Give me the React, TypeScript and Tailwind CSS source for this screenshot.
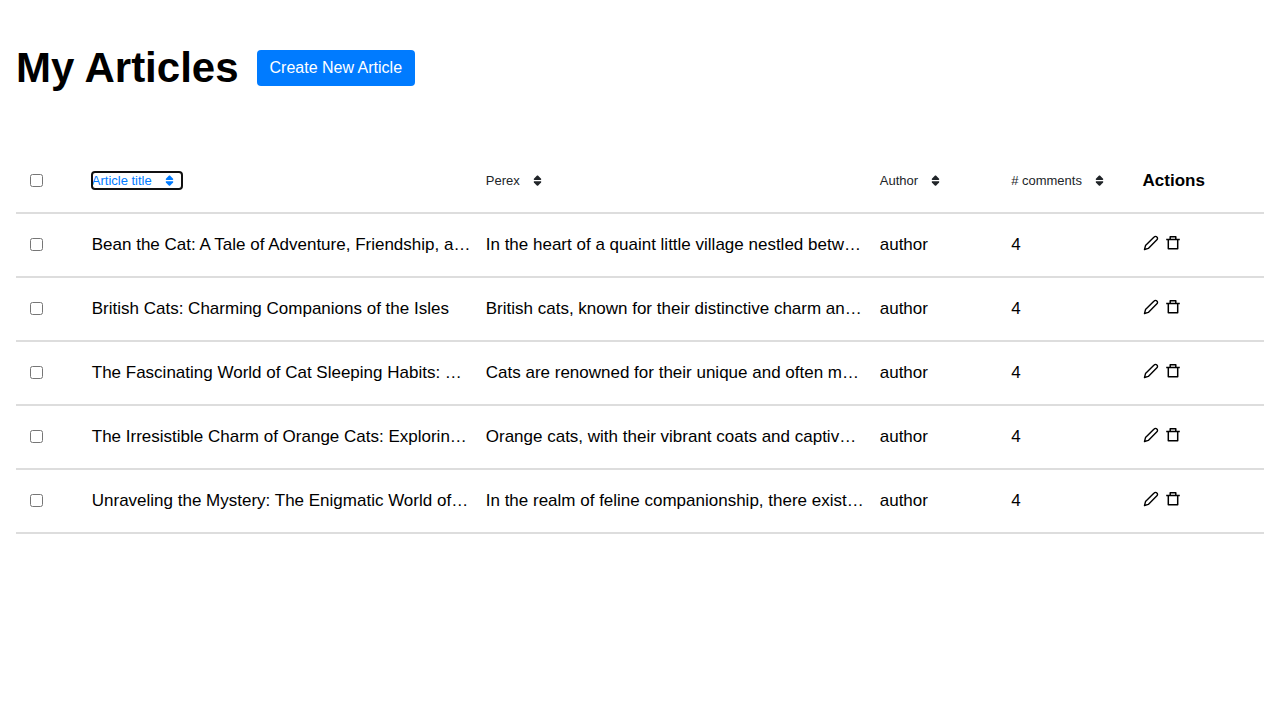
import React from "react";

type Article = {
  id: number;
  title: string;
  perex: string;
  author: string;
  comments: number;
};

const articles: Article[] = [
  {
    id: 1,
    title: "Bean the Cat: A Tale of Adventure, Friendship, and Feline Grace",
    perex: "In the heart of a quaint little village nestled between rolling hills and green meadows",
    author: "author",
    comments: 4,
  },
  {
    id: 2,
    title: "British Cats: Charming Companions of the Isles",
    perex: "British cats, known for their distinctive charm and gentle nature",
    author: "author",
    comments: 4,
  },
  {
    id: 3,
    title: "The Fascinating World of Cat Sleeping Habits: Unveiling the Secrets",
    perex: "Cats are renowned for their unique and often mysterious behaviour",
    author: "author",
    comments: 4,
  },
  {
    id: 4,
    title: "The Irresistible Charm of Orange Cats: Exploring Their Vibrant World",
    perex: "Orange cats, with their vibrant coats and captivating personalities",
    author: "author",
    comments: 4,
  },
  {
    id: 5,
    title: "Unraveling the Mystery: The Enigmatic World of Black Cats",
    perex: "In the realm of feline companionship, there exists a creature of mystery",
    author: "author",
    comments: 4,
  },
];

function SortIcon() {
  return (
    <svg viewBox="0 0 24 16" className="h-4 w-6" fill="currentColor" aria-hidden="true">
      <path d="M11.5 2.5c.3 0 .5.1.7.3l2.9 3c.4.5.1 1.2-.5 1.2H8.4c-.6 0-.9-.7-.5-1.2l2.9-3c.2-.2.4-.3.7-.3z" />
      <path d="M11.5 12.7c.3 0 .5-.1.7-.3l2.9-3c.4-.5.1-1.2-.5-1.2H8.4c-.6 0-.9.7-.5 1.2l2.9 3c.2.2.4.3.7.3z" />
    </svg>
  );
}

function PencilIcon() {
  return (
    <svg
      viewBox="0 0 16 16"
      className="size-4"
      fill="none"
      stroke="currentColor"
      strokeWidth="1.4"
      strokeLinejoin="round"
      aria-hidden="true"
    >
      <path d="M1.5 14.5l1-3.9 8.6-8.6a1.9 1.9 0 0 1 2.8 0 1.9 1.9 0 0 1 0 2.8l-8.6 8.6z" />
    </svg>
  );
}

function TrashIcon() {
  return (
    <svg
      viewBox="0 0 16 16"
      className="size-4"
      fill="none"
      stroke="currentColor"
      strokeWidth="1.5"
      strokeLinejoin="round"
      aria-hidden="true"
    >
      <path d="M1.2 4.6h13.6M3.3 4.6v9.2h9.4V4.6M5.2 4.5V1.8h5.6v2.7" />
    </svg>
  );
}

function SortButton({ label, active = false }: { label: string; active?: boolean }) {
  return (
    <button
      type="button"
      className={
        active
          ? "flex h-[17px] items-center gap-1.5 rounded-[3px] text-[#007bff] outline-2 -outline-offset-1 outline-[#101010]"
          : "flex h-[17px] items-center gap-1.5 text-[#212529]"
      }
    >
      {label}
      <SortIcon />
    </button>
  );
}

export default function App() {
  return (
    <main className="bg-white px-4 font-['Liberation_Sans',Arial,sans-serif] text-[17px] leading-6 text-black">
      <header className="flex items-center gap-[18px] pt-10">
        <h1 className="text-[42px] leading-14 font-bold">My Articles</h1>
        <button
          type="button"
          className="h-9 rounded-sm bg-[#007bff] px-[13px] text-base text-white"
        >
          Create New Article
        </button>
      </header>

      <table className="mt-[53px] w-full table-fixed border-collapse text-left">
        <colgroup>
          <col className="w-[5.27%]" />
          <col className="w-[31.57%]" />
          <col className="w-[31.57%]" />
          <col className="w-[10.53%]" />
          <col className="w-[10.53%]" />
          <col className="w-[10.53%]" />
        </colgroup>
        <thead>
          <tr className="h-16 border-b-2 border-[#dddddd] text-[13px]">
            <th className="px-[10px] font-normal">
              <input type="checkbox" aria-label="Select all articles" className="ml-1 block size-[13px]" />
            </th>
            <th className="px-[10px] font-normal">
              <SortButton label="Article title" active />
            </th>
            <th className="px-[10px] font-normal">
              <SortButton label="Perex" />
            </th>
            <th className="px-[10px] font-normal">
              <SortButton label="Author" />
            </th>
            <th className="px-[10px] font-normal">
              <SortButton label="# comments" />
            </th>
            <th className="px-[10px] text-[17px] font-bold">Actions</th>
          </tr>
        </thead>
        <tbody>
          {articles.map((article) => (
            <tr key={article.id} className="h-16 border-b-2 border-[#dddddd]">
              <td className="px-[10px] pb-0.5">
                <input
                  type="checkbox"
                  aria-label={`Select ${article.title}`}
                  className="ml-1 block size-[13px]"
                />
              </td>
              <td className="truncate pr-[5px] pl-[10px]">{article.title}</td>
              <td className="truncate pr-[5px] pl-[10px]">{article.perex}</td>
              <td className="px-[10px]">{article.author}</td>
              <td className="px-[10px]">{article.comments}</td>
              <td className="px-[10px]">
                <div className="flex gap-1.5 pb-1">
                  <button type="button" aria-label="Edit article">
                    <PencilIcon />
                  </button>
                  <button type="button" aria-label="Delete article">
                    <TrashIcon />
                  </button>
                </div>
              </td>
            </tr>
          ))}
        </tbody>
      </table>
    </main>
  );
}
